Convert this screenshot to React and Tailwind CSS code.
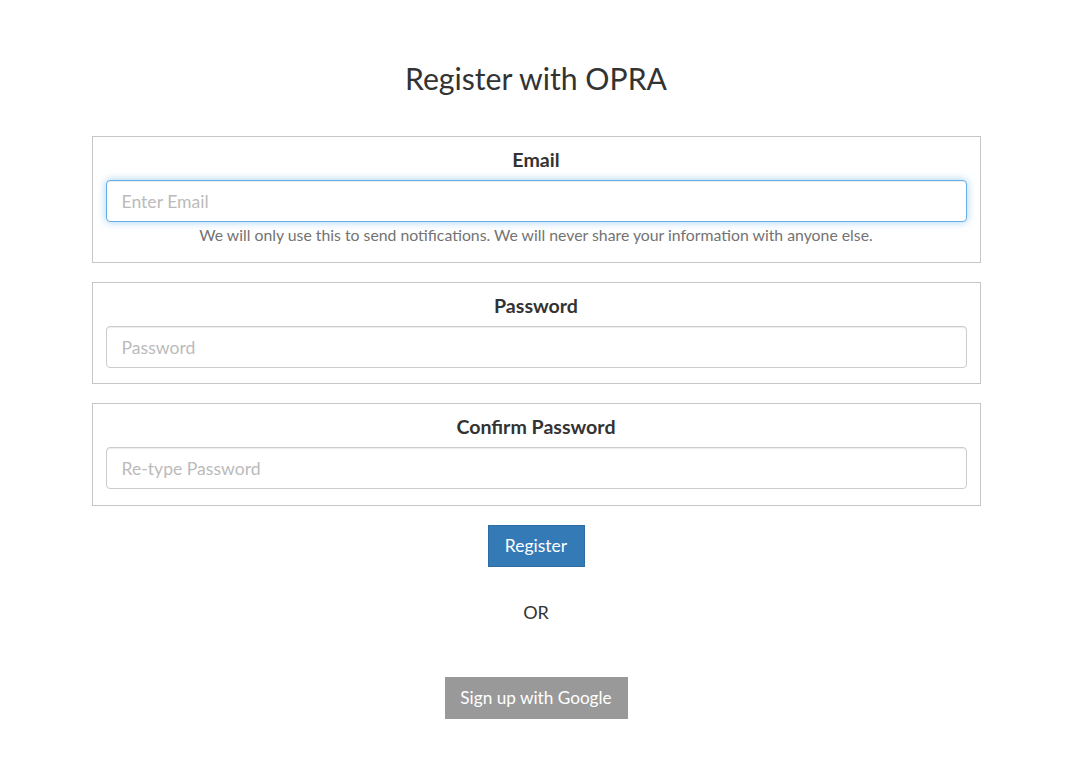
export default function App() {
  const font = { fontFamily: "Lato, 'Open Sans', sans-serif" };
  const base =
    "block w-full h-[42px] rounded-[4px] border bg-white px-[15px] text-[17.6px] text-[#555] placeholder:text-[#bbbbbb] outline-none";
  const inputCls = base + " border-[#cccccc] shadow-[inset_0_1px_1px_rgba(0,0,0,0.075)]";
  const focusCls =
    base + " border-[#66afe9] shadow-[inset_0_1px_1px_rgba(0,0,0,0.075),0_0_8px_rgba(102,175,233,0.6)]";
  const labelCls = "block text-center text-[19.6px] leading-[25px] font-bold mb-[8px]";
  return (
    <div className="w-[1072px] bg-white text-[#333]" style={font}>
      <div className="flex flex-col items-center">
        <h2 className="mt-[58px] text-[30.2px] leading-[40px] font-normal text-[#333]">Register with OPRA</h2>
        <div className="mt-[38px] w-[889px] flex flex-col gap-[19px]">
          <div className="border border-[#c6c6c6] px-[13px] pt-[10px] pb-[15px]">
            <label className={labelCls}>Email</label>
            <input className={focusCls} placeholder="Enter Email" />
            <p className="text-center text-[15.8px] leading-[25px] text-[#737373]">
              We will only use this to send notifications. We will never share your information with anyone else.
            </p>
          </div>
          <div className="border border-[#c6c6c6] px-[13px] pt-[10px] pb-[15px]">
            <label className={labelCls}>Password</label>
            <input type="password" className={inputCls} placeholder="Password" />
          </div>
          <div className="border border-[#c6c6c6] px-[13px] pt-[10px] pb-[16px]">
            <label className={labelCls}>Confirm Password</label>
            <input type="password" className={inputCls} placeholder="Re-type Password" />
          </div>
        </div>
        <button className="mt-[19px] h-[42px] w-[97px] bg-[#337ab7] border border-[#2e6da4] text-white text-[17.5px]">
          Register
        </button>
        <div className="mt-[33px] text-[18px] leading-[24px]">OR</div>
        <button className="mt-[53px] h-[42px] w-[183px] bg-[#999999] text-white text-[17.2px]">
          Sign up with Google
        </button>
      </div>
    </div>
  );
}
